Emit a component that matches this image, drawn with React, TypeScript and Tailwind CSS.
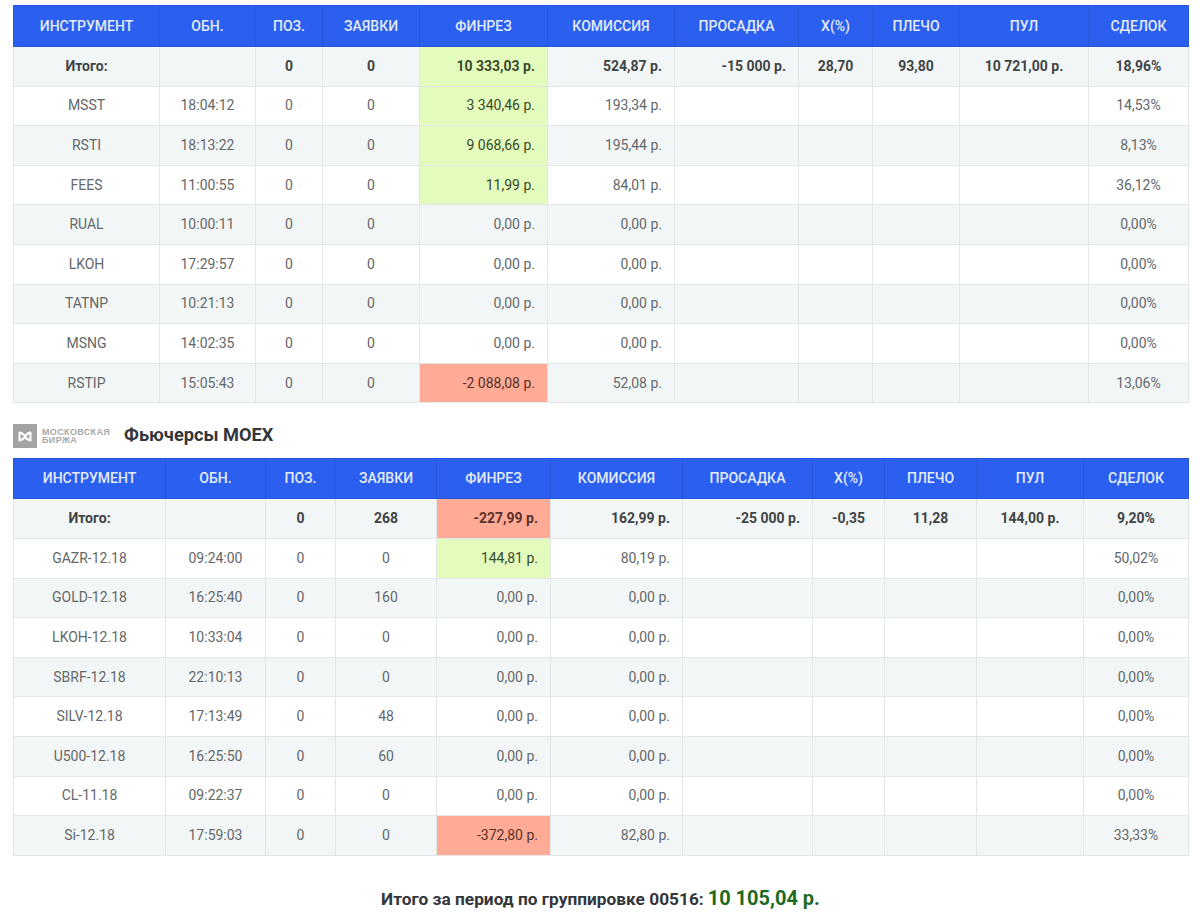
type Row = {
  name: string;
  time: string;
  pos: string;
  orders: string;
  pnl: string;
  tone?: "green" | "red";
  fee: string;
  deals: string;
};

type Total = {
  pos: string;
  orders: string;
  pnl: string;
  tone: "green" | "red";
  fee: string;
  drawdown: string;
  x: string;
  leverage: string;
  pool: string;
  deals: string;
};

const headers = ["Инструмент", "Обн.", "Поз.", "Заявки", "Финрез", "Комиссия", "Просадка", "Х(%)", "Плечо", "Пул", "Сделок"];

const stocks: Row[] = [
  { name: "MSST", time: "18:04:12", pos: "0", orders: "0", pnl: "3 340,46 р.", tone: "green", fee: "193,34 р.", deals: "14,53%" },
  { name: "RSTI", time: "18:13:22", pos: "0", orders: "0", pnl: "9 068,66 р.", tone: "green", fee: "195,44 р.", deals: "8,13%" },
  { name: "FEES", time: "11:00:55", pos: "0", orders: "0", pnl: "11,99 р.", tone: "green", fee: "84,01 р.", deals: "36,12%" },
  { name: "RUAL", time: "10:00:11", pos: "0", orders: "0", pnl: "0,00 р.", fee: "0,00 р.", deals: "0,00%" },
  { name: "LKOH", time: "17:29:57", pos: "0", orders: "0", pnl: "0,00 р.", fee: "0,00 р.", deals: "0,00%" },
  { name: "TATNP", time: "10:21:13", pos: "0", orders: "0", pnl: "0,00 р.", fee: "0,00 р.", deals: "0,00%" },
  { name: "MSNG", time: "14:02:35", pos: "0", orders: "0", pnl: "0,00 р.", fee: "0,00 р.", deals: "0,00%" },
  { name: "RSTIP", time: "15:05:43", pos: "0", orders: "0", pnl: "-2 088,08 р.", tone: "red", fee: "52,08 р.", deals: "13,06%" },
];

const futures: Row[] = [
  { name: "GAZR-12.18", time: "09:24:00", pos: "0", orders: "0", pnl: "144,81 р.", tone: "green", fee: "80,19 р.", deals: "50,02%" },
  { name: "GOLD-12.18", time: "16:25:40", pos: "0", orders: "160", pnl: "0,00 р.", fee: "0,00 р.", deals: "0,00%" },
  { name: "LKOH-12.18", time: "10:33:04", pos: "0", orders: "0", pnl: "0,00 р.", fee: "0,00 р.", deals: "0,00%" },
  { name: "SBRF-12.18", time: "22:10:13", pos: "0", orders: "0", pnl: "0,00 р.", fee: "0,00 р.", deals: "0,00%" },
  { name: "SILV-12.18", time: "17:13:49", pos: "0", orders: "48", pnl: "0,00 р.", fee: "0,00 р.", deals: "0,00%" },
  { name: "U500-12.18", time: "16:25:50", pos: "0", orders: "60", pnl: "0,00 р.", fee: "0,00 р.", deals: "0,00%" },
  { name: "CL-11.18", time: "09:22:37", pos: "0", orders: "0", pnl: "0,00 р.", fee: "0,00 р.", deals: "0,00%" },
  { name: "Si-12.18", time: "17:59:03", pos: "0", orders: "0", pnl: "-372,80 р.", tone: "red", fee: "82,80 р.", deals: "33,33%" },
];

const cell = "border border-[#e3e7e7] px-[13px] text-center";
const right = "border border-[#e3e7e7] px-[12px] text-right";

function toneClass(tone?: "green" | "red") {
  if (tone === "green") return "bg-[#e3fbbd] text-[#3a4a2a]";
  if (tone === "red") return "bg-[#ffab96] text-[#5a3128]";
  return "";
}

function StatsTable({ widths, total, rows, tall }: { widths: number[]; total: Total; rows: Row[]; tall?: boolean }) {
  return (
    <table className="w-[1175px] table-fixed border-collapse text-[14px] text-[#63686a]">
      <colgroup>
        {widths.map((w, i) => (
          <col key={i} style={{ width: w }} />
        ))}
      </colgroup>
      <thead>
        <tr className={tall ? "h-[41px] bg-[#2a5ff0] text-[#e4ebfb]" : "h-[40px] bg-[#2a5ff0] text-[#e4ebfb]"}>
          {headers.map((h) => (
            <th key={h} className="border border-[#2556dc] p-0 text-center font-medium uppercase">
              {h}
            </th>
          ))}
        </tr>
      </thead>
      <tbody>
        <tr className="h-[39.6px] bg-[#f3f6f6] font-bold text-[#3f4445]">
          <td className={cell}>Итого:</td>
          <td className={cell}></td>
          <td className={cell}>{total.pos}</td>
          <td className={cell}>{total.orders}</td>
          <td className={`${right} ${toneClass(total.tone)}`}>{total.pnl}</td>
          <td className={right}>{total.fee}</td>
          <td className={right}>{total.drawdown}</td>
          <td className={cell}>{total.x}</td>
          <td className={cell}>{total.leverage}</td>
          <td className={cell}>{total.pool}</td>
          <td className={cell}>{total.deals}</td>
        </tr>
        {rows.map((r, i) => (
          <tr key={r.name} className={i % 2 === 0 ? "h-[39.6px] bg-white" : "h-[39.6px] bg-[#f3f6f6]"}>
            <td className={cell}>{r.name}</td>
            <td className={cell}>{r.time}</td>
            <td className={cell}>{r.pos}</td>
            <td className={cell}>{r.orders}</td>
            <td className={`${right} ${toneClass(r.tone)}`}>{r.pnl}</td>
            <td className={right}>{r.fee}</td>
            <td className={cell}></td>
            <td className={cell}></td>
            <td className={cell}></td>
            <td className={cell}></td>
            <td className={cell}>{r.deals}</td>
          </tr>
        ))}
      </tbody>
    </table>
  );
}

function MoexLogo() {
  return (
    <div className="mt-[4px] flex items-center gap-[5px]">
      <div className="flex h-[24px] w-[24px] items-center justify-center bg-[#a3a3a3]">
        <svg width="14" height="11" viewBox="0 0 14 11" fill="none" stroke="white" strokeWidth="2" strokeLinejoin="round">
          <path d="M1.5 1.5c0 3 0 5 0 8C4 9 6 7.5 7 5.5 6 3.5 4 2 1.5 1.5Z" />
          <path d="M12.5 1.5c0 3 0 5 0 8C10 9 8 7.5 7 5.5 8 3.5 10 2 12.5 1.5Z" />
        </svg>
      </div>
      <div className="text-[9px] leading-[8.5px] font-bold tracking-[0.35px] text-[#a8a8a8] [font-family:'Liberation_Sans',sans-serif]">
        <div>МОСКОВСКАЯ</div>
        <div>БИРЖА</div>
      </div>
    </div>
  );
}

export default function App() {
  return (
    <div className="h-[921px] overflow-hidden bg-white pt-[5px] pl-[13px] [font-family:Roboto,sans-serif]">
      <StatsTable
        tall
        widths={[146, 96, 67, 97, 128, 127, 124, 74, 87, 129, 100]}
        total={{ pos: "0", orders: "0", pnl: "10 333,03 р.", tone: "green", fee: "524,87 р.", drawdown: "-15 000 р.", x: "28,70", leverage: "93,80", pool: "10 721,00 р.", deals: "18,96%" }}
        rows={stocks}
      />

      <div className="mt-[18px] mb-[11px] flex h-[26px] items-center gap-[14px]">
        <MoexLogo />
        <h2 className="text-[18.2px] font-bold text-[#33363b]">Фьючерсы MOEX</h2>
      </div>

      <StatsTable
        widths={[152, 100, 70, 101, 114, 132, 130, 72, 92, 107, 105]}
        total={{ pos: "0", orders: "268", pnl: "-227,99 р.", tone: "red", fee: "162,99 р.", drawdown: "-25 000 р.", x: "-0,35", leverage: "11,28", pool: "144,00 р.", deals: "9,20%" }}
        rows={futures}
      />

      <div className="mt-[27px] flex w-[1175px] items-baseline justify-center gap-[4px] font-bold text-[#33363b]">
        <span className="text-[17.3px]">Итого за период по группировке 00516:</span>
        <span className="text-[20px] text-[#1d6b22]">10 105,04 р.</span>
      </div>
    </div>
  );
}
